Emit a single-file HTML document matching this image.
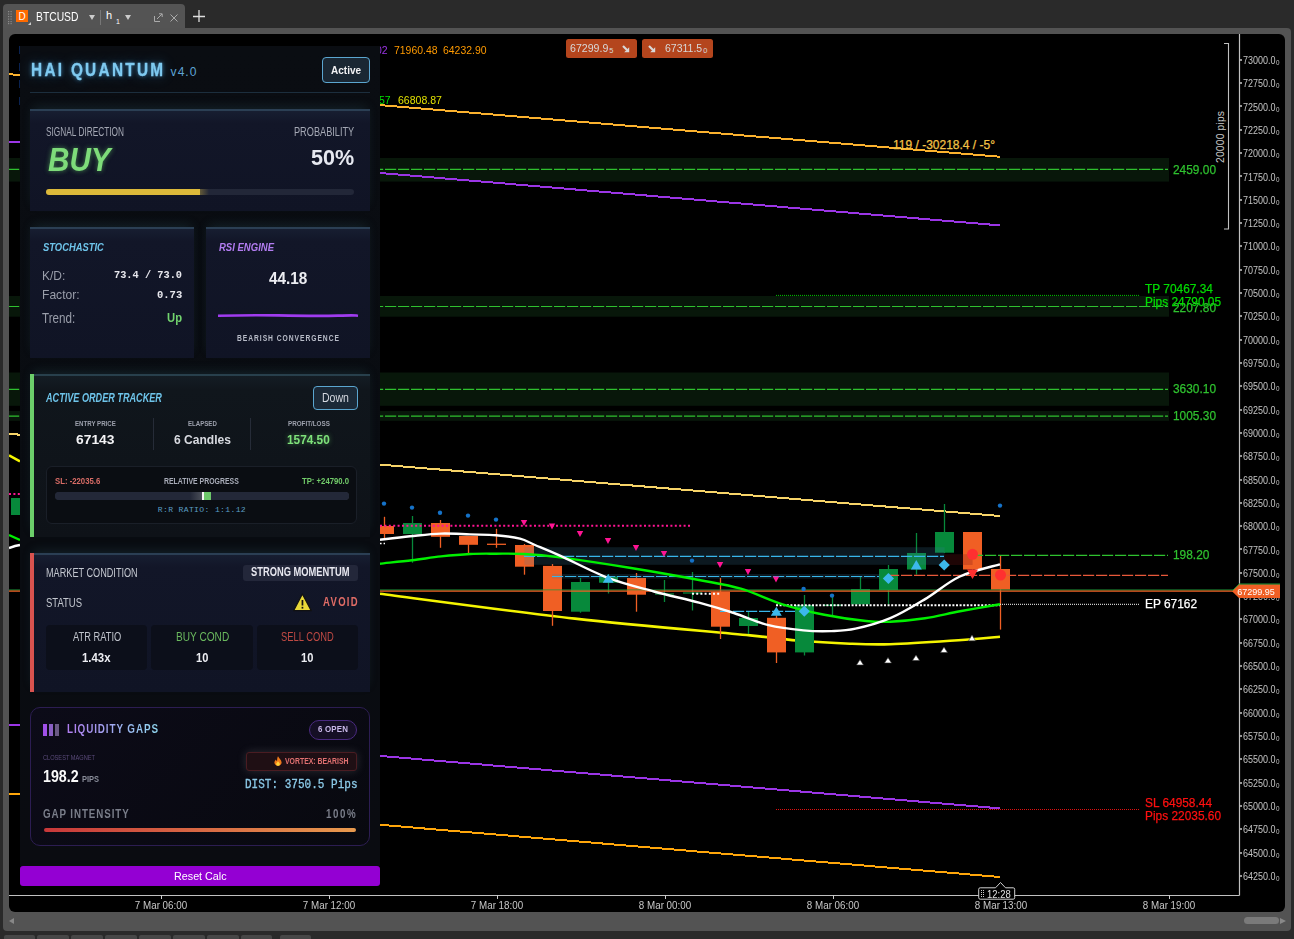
<!DOCTYPE html>
<html><head><meta charset="utf-8">
<style>
*{margin:0;padding:0;box-sizing:border-box}
html,body{width:1294px;height:939px;overflow:hidden;background:#2a2a2a;font-family:"Liberation Sans",sans-serif}
.abs{position:absolute}
#tab{position:absolute;left:3px;top:4px;width:182px;height:30px;background:#545454;border-radius:4px 4px 0 0}
#frame{position:absolute;left:3px;top:28px;width:1288px;height:903px;background:#535353;border-radius:0 4px 4px 4px}
#chart{position:absolute;left:9px;top:34px;width:1276px;height:878px;background:#000;border-radius:6px;overflow:hidden}
svg{position:absolute;left:0;top:0}
.pl{position:absolute;left:1243px;font-size:10px;color:#c4c4c4;line-height:14px;transform:scaleX(.9);transform-origin:0 0;white-space:nowrap}
.pl sub{font-size:7px;vertical-align:-1px;line-height:0;margin-left:.5px}
.ptk{position:absolute;left:1240px;width:2px;height:2px;background:#999}
.tl{position:absolute;top:898px;width:80px;text-align:center;font-size:11px;color:#c8c8c8;line-height:14px;transform:scaleX(.89)}
.ttk{position:absolute;top:895px;width:1px;height:4px;background:#ccc}
.gl{position:absolute;font-size:13px;color:#2fc12f;line-height:14px;transform:scaleX(.915);transform-origin:0 0;white-space:nowrap;-webkit-text-stroke:.25px currentColor}
.bt{position:absolute;height:5px;background:#474747;border-radius:2px 2px 0 0}
</style></head><body>
<div id="tab"></div>
<svg class="abs" style="left:7px;top:10px" width="6" height="15"><rect x="1" y="1" width="1.2" height="1.2" fill="#8a8a8a"/><rect x="1" y="3.5" width="1.2" height="1.2" fill="#8a8a8a"/><rect x="1" y="6" width="1.2" height="1.2" fill="#8a8a8a"/><rect x="1" y="8.5" width="1.2" height="1.2" fill="#8a8a8a"/><rect x="1" y="11" width="1.2" height="1.2" fill="#8a8a8a"/><rect x="1" y="13" width="1.2" height="1.2" fill="#8a8a8a"/><rect x="3.5" y="1" width="1.2" height="1.2" fill="#8a8a8a"/><rect x="3.5" y="3.5" width="1.2" height="1.2" fill="#8a8a8a"/><rect x="3.5" y="6" width="1.2" height="1.2" fill="#8a8a8a"/><rect x="3.5" y="8.5" width="1.2" height="1.2" fill="#8a8a8a"/><rect x="3.5" y="11" width="1.2" height="1.2" fill="#8a8a8a"/><rect x="3.5" y="13" width="1.2" height="1.2" fill="#8a8a8a"/></svg>
<div class="abs" style="left:16px;top:10px;width:12px;height:12px;background:#ff6a00;color:#fff;font-size:10px;line-height:13px;text-align:center">D</div>
<div class="abs" style="left:28px;top:22px;width:0;height:0;border-left:3px solid transparent;border-bottom:3px solid #ccc"></div>
<div class="abs" style="left:36px;top:10px;font-size:12px;color:#fff;line-height:14px;transform:scaleX(.86);transform-origin:0 0">BTCUSD</div>
<div class="abs" style="left:89px;top:15px;width:0;height:0;border-left:3px solid transparent;border-right:3px solid transparent;border-top:5px solid #ccc"></div>
<div class="abs" style="left:100px;top:10px;width:1px;height:15px;background:#777"></div>
<div class="abs" style="left:106px;top:9px;font-size:11px;color:#fff;line-height:12px">h</div>
<div class="abs" style="left:116px;top:18px;font-size:7px;color:#fff;line-height:8px">1</div>
<div class="abs" style="left:124.5px;top:15px;width:0;height:0;border-left:3px solid transparent;border-right:3px solid transparent;border-top:5px solid #ccc"></div>
<svg class="abs" style="left:154px;top:13px" width="9" height="9"><path d="M0.5 3v5.5h5.5M3 6l5-5M5 0.8h3.2v3.2" fill="none" stroke="#aaa" stroke-width="1"/></svg>
<svg class="abs" style="left:169.5px;top:13.5px" width="8" height="8"><path d="M0.5 0.5l7 7M7.5 0.5l-7 7" stroke="#aaa" stroke-width="1"/></svg>
<svg class="abs" style="left:193px;top:10px" width="13" height="13"><path d="M0 6.5h12M6 0v12" stroke="#ddd" stroke-width="1.3"/></svg>
<div id="frame"></div>
<div id="chart"></div>
<svg width="1294" height="939" viewBox="0 0 1294 939" style="position:absolute;left:0;top:0">
<defs><clipPath id="cc"><rect x="9" y="34" width="1229" height="861"/></clipPath></defs>
<g clip-path="url(#cc)">
<rect x="9" y="158" width="1160" height="23.6" fill="#08170a"/>
<line x1="9" y1="169.3" x2="1168" y2="169.3" stroke="#2fc12f" stroke-width="1.2" stroke-dasharray="11.2 1.8" stroke-dashoffset="1"/>
<rect x="9" y="296" width="1160" height="20.7" fill="#08170a"/>
<line x1="9" y1="306.5" x2="1168" y2="306.5" stroke="#2fc12f" stroke-width="1.2" stroke-dasharray="11.2 1.8" stroke-dashoffset="1"/>
<rect x="9" y="372.5" width="1160" height="33.3" fill="#08170a"/>
<line x1="9" y1="389.3" x2="1168" y2="389.3" stroke="#2fc12f" stroke-width="1.2" stroke-dasharray="11.2 1.8" stroke-dashoffset="1"/>
<rect x="9" y="411" width="1160" height="9.8" fill="#08170a"/>
<line x1="9" y1="416.2" x2="1168" y2="416.2" stroke="#2fc12f" stroke-width="1.2" stroke-dasharray="11.2 1.8" stroke-dashoffset="1"/>
<line x1="9" y1="74.2" x2="1000" y2="156.8" stroke="#fbb22e" stroke-width="2" shape-rendering="crispEdges"/>
<line x1="9" y1="141.6" x2="1000" y2="225.4" stroke="#9b35e6" stroke-width="2" shape-rendering="crispEdges"/>
<line x1="9" y1="433.8" x2="1000" y2="516" stroke="#f7d468" stroke-width="2" shape-rendering="crispEdges"/>
<line x1="9" y1="724.5" x2="1000" y2="808.4" stroke="#9b35e6" stroke-width="2" shape-rendering="crispEdges"/>
<line x1="9" y1="793.5" x2="1000" y2="877" stroke="#ffa60a" stroke-width="2" shape-rendering="crispEdges"/>
<path fill="none" stroke="#f5f500" stroke-width="2.6" d="M380,593.8 C412.5,597.9 513.3,611.7 575,618.6 C636.7,625.5 712.5,631.7 750,635.4 C787.5,639.1 783.3,639.4 800,640.8 C816.7,642.2 835,643.1 850,643.7 C865,644.3 873.3,644.7 890,644.2 C906.7,643.7 931.7,642 950,640.7 C968.3,639.5 991.7,637.4 1000,636.7"/>
<line x1="9" y1="455.3" x2="20" y2="461.3" stroke="#f5f500" stroke-width="2.6"/>
<line x1="384.5" y1="516.8" x2="384.5" y2="538.7" stroke="#f05f24" stroke-width="1.3"/>
<rect x="375" y="526" width="19" height="8" fill="#f05f24"/>
<line x1="412.5" y1="516" x2="412.5" y2="562.7" stroke="#07893b" stroke-width="1.3"/>
<rect x="403" y="523" width="19" height="11" fill="#07893b"/>
<line x1="440.5" y1="520" x2="440.5" y2="547.8" stroke="#f05f24" stroke-width="1.3"/>
<rect x="431" y="523" width="19" height="13.8" fill="#f05f24"/>
<line x1="468.5" y1="536" x2="468.5" y2="554.7" stroke="#f05f24" stroke-width="1.3"/>
<rect x="459" y="536" width="19" height="8.8" fill="#f05f24"/>
<line x1="496.5" y1="528.8" x2="496.5" y2="547.8" stroke="#f05f24" stroke-width="1.3"/>
<line x1="487" y1="544.3" x2="506" y2="544.3" stroke="#f05f24" stroke-width="1.3"/>
<line x1="524.5" y1="544" x2="524.5" y2="574.7" stroke="#f05f24" stroke-width="1.3"/>
<rect x="515" y="545" width="19" height="21.7" fill="#f05f24"/>
<line x1="552.5" y1="564" x2="552.5" y2="625.8" stroke="#f05f24" stroke-width="1.3"/>
<rect x="543" y="565.9" width="19" height="45.1" fill="#f05f24"/>
<line x1="580.5" y1="578" x2="580.5" y2="612.7" stroke="#07893b" stroke-width="1.3"/>
<rect x="571" y="582" width="19" height="29.7" fill="#07893b"/>
<line x1="608.5" y1="574" x2="608.5" y2="593.5" stroke="#07893b" stroke-width="1.3"/>
<rect x="599" y="576.4" width="19" height="6.3" fill="#07893b"/>
<line x1="636.5" y1="573" x2="636.5" y2="611.7" stroke="#f05f24" stroke-width="1.3"/>
<rect x="627" y="578" width="19" height="16.7" fill="#f05f24"/>
<line x1="664.5" y1="580" x2="664.5" y2="602" stroke="#07893b" stroke-width="1.3"/>
<line x1="655" y1="594" x2="674" y2="594" stroke="#07893b" stroke-width="1.3"/>
<line x1="692.5" y1="572" x2="692.5" y2="610.5" stroke="#07893b" stroke-width="1.3"/>
<line x1="683" y1="593" x2="702" y2="593" stroke="#07893b" stroke-width="1.3"/>
<line x1="720.5" y1="578" x2="720.5" y2="639" stroke="#f05f24" stroke-width="1.3"/>
<rect x="711" y="591.8" width="19" height="34.9" fill="#f05f24"/>
<line x1="748.5" y1="611.7" x2="748.5" y2="634" stroke="#07893b" stroke-width="1.3"/>
<rect x="739" y="618" width="19" height="8" fill="#07893b"/>
<line x1="776.5" y1="615.4" x2="776.5" y2="663" stroke="#f05f24" stroke-width="1.3"/>
<rect x="767" y="617.8" width="19" height="34.6" fill="#f05f24"/>
<line x1="804.5" y1="595" x2="804.5" y2="655.5" stroke="#07893b" stroke-width="1.3"/>
<rect x="795" y="605" width="19" height="47.4" fill="#07893b"/>
<line x1="832.5" y1="595" x2="832.5" y2="615.4" stroke="#07893b" stroke-width="1.3"/>
<line x1="823" y1="605.3" x2="842" y2="605.3" stroke="#07893b" stroke-width="1.3"/>
<line x1="860.5" y1="576.6" x2="860.5" y2="604.3" stroke="#07893b" stroke-width="1.3"/>
<rect x="851" y="589" width="19" height="15.3" fill="#07893b"/>
<line x1="888.5" y1="565" x2="888.5" y2="604.3" stroke="#07893b" stroke-width="1.3"/>
<rect x="879" y="569" width="19" height="21" fill="#07893b"/>
<line x1="916.5" y1="533" x2="916.5" y2="574.6" stroke="#07893b" stroke-width="1.3"/>
<rect x="907" y="553" width="19" height="16.5" fill="#07893b"/>
<line x1="944.5" y1="504" x2="944.5" y2="553" stroke="#07893b" stroke-width="1.3"/>
<rect x="935" y="532" width="19" height="20.7" fill="#07893b"/>
<line x1="972.5" y1="532" x2="972.5" y2="569.5" stroke="#f05f24" stroke-width="1.3"/>
<rect x="963" y="532" width="19" height="37.5" fill="#f05f24"/>
<line x1="1000.5" y1="555.7" x2="1000.5" y2="629.6" stroke="#f05f24" stroke-width="1.3"/>
<rect x="991" y="569" width="19" height="20.7" fill="#f05f24"/>
<rect x="11" y="498" width="9" height="17" fill="#07893b"/>
<rect x="524.4" y="547.2" width="420.2" height="17.6" fill="rgba(60,125,160,0.2)"/>
<rect x="944.6" y="554.2" width="28" height="10.8" fill="rgba(120,20,20,0.25)"/>
<rect x="552" y="574" width="328" height="4.6" fill="rgba(60,125,160,0.2)"/>
<line x1="972" y1="555.4" x2="1168" y2="555.4" stroke="#2fc12f" stroke-width="1.2" stroke-dasharray="11.2 1.8"/>
<line x1="524" y1="556.4" x2="944" y2="556.4" stroke="#38b6ea" stroke-width="1.2" stroke-dasharray="11.2 1.8"/>
<line x1="552" y1="576.5" x2="879" y2="576.5" stroke="#38b6ea" stroke-width="1.2" stroke-dasharray="11.2 1.8"/>
<line x1="720" y1="611.4" x2="795" y2="611.4" stroke="#38b6ea" stroke-width="1.2" stroke-dasharray="11.2 1.8"/>
<line x1="888" y1="575.4" x2="1168" y2="575.4" stroke="#e8583a" stroke-width="1.2" stroke-dasharray="11.2 1.8"/>
<line x1="380" y1="525.8" x2="692" y2="525.8" stroke="#ff1493" stroke-width="2" stroke-dasharray="2 2.4"/>
<line x1="9" y1="494" x2="20" y2="494" stroke="#ff1493" stroke-width="2" stroke-dasharray="2 2.4"/>
<line x1="776" y1="295.4" x2="1140" y2="295.4" stroke="#00c800" stroke-width="1" stroke-dasharray="1 1"/>
<line x1="776" y1="809.5" x2="1140" y2="809.5" stroke="#e01010" stroke-width="1" stroke-dasharray="1 1"/>
<line x1="776" y1="605.2" x2="1000" y2="605.2" stroke="#ffffff" stroke-width="2" stroke-dasharray="2 1.6"/>
<line x1="1000" y1="604.3" x2="1140" y2="604.3" stroke="#ffffff" stroke-width="1" stroke-dasharray="1 1"/>
<line x1="692" y1="593.8" x2="721" y2="593.8" stroke="#ffffff" stroke-width="2" stroke-dasharray="2 2.2"/>
<line x1="380" y1="543.5" x2="385" y2="543.5" stroke="#ffffff" stroke-width="1.6" stroke-dasharray="1.6 2"/>
<line x1="9" y1="590" x2="1238" y2="590" stroke="#1f9a3a" stroke-width="1.2"/>
<line x1="9" y1="591.2" x2="1238" y2="591.2" stroke="#f05f24" stroke-width="1.2"/>
<path fill="none" stroke="#00f000" stroke-width="2.4" d="M380,563.7 C385.3,563.1 401.8,561.5 412,560.3 C422.2,559.1 431.3,557.4 441,556.4 C450.7,555.4 460.8,554.5 470,554 C479.2,553.5 487,553.7 496,553.7 C505,553.7 513.3,553.4 524,554 C534.7,554.6 542.4,555.1 560,557.4 C577.6,559.7 606.3,564 629.5,567.8 C652.7,571.6 680.5,576.5 699,580 C717.5,583.5 726.9,584.7 740.8,588.7 C754.7,592.8 768.6,599.9 782.5,604.3 C796.4,608.6 810.4,612 824.3,614.8 C838.2,617.6 855,619.9 866,621 C877,622.1 880.5,622.2 890.3,621.7 C900.1,621.2 913.4,619.9 925,618.2 C936.6,616.5 947.5,613.6 960,611.3 C972.5,609 993.3,605.5 1000,604.3"/>
<path fill="none" stroke="#ffffff" stroke-width="2.4" d="M380,539.8 C385,539.2 399.8,537.3 410,536.3 C420.2,535.3 431,533.9 441,533.6 C451,533.3 460.8,534.1 470,534.4 C479.2,534.7 487.7,534.5 496,535.2 C504.3,535.9 513.5,537.1 520,538.7 C526.5,540.3 528.3,542.2 535,545 C541.7,547.8 547.7,550.1 560,555.6 C572.3,561.1 593.1,572.2 608.7,578.2 C624.4,584.2 638.9,587.4 653.9,591.5 C668.9,595.6 685.7,599 699,602.6 C712.3,606.2 722.3,609.2 733.9,613 C745.5,616.8 757,622.3 768.6,625.2 C780.2,628.1 793,629.4 803.4,630.4 C813.8,631.4 822.5,631.4 831.2,631.1 C839.9,630.8 845.6,630.9 855.5,628.7 C865.4,626.6 878.7,623.1 890.3,618.2 C901.9,613.3 913.5,606.1 925.1,599.1 C936.7,592.1 947.4,582.3 959.9,576.5 C972.4,570.7 993.3,566.3 1000,564.3"/>
<line x1="9" y1="535" x2="20" y2="540" stroke="#00f000" stroke-width="2.4"/>
<polyline fill="none" stroke="#ffffff" stroke-width="2.4" points="9,548 15,546 20,545"/>
<circle cx="384" cy="503.6" r="2.2" fill="#1572c8"/>
<circle cx="412" cy="507.6" r="2.2" fill="#1572c8"/>
<circle cx="440" cy="512.7" r="2.2" fill="#1572c8"/>
<circle cx="468" cy="515.6" r="2.2" fill="#1572c8"/>
<circle cx="496" cy="519.6" r="2.2" fill="#1572c8"/>
<circle cx="692" cy="560.6" r="2.2" fill="#1572c8"/>
<circle cx="803.6" cy="589" r="2.2" fill="#1572c8"/>
<circle cx="832" cy="595.6" r="2.2" fill="#1572c8"/>
<circle cx="1000" cy="505.6" r="2.2" fill="#1572c8"/>
<polygon points="520.8,520 527.2,520 524,526" fill="#ff1493"/>
<polygon points="548.8,523.5 555.2,523.5 552,529.5" fill="#ff1493"/>
<polygon points="576.8,531 583.2,531 580,537" fill="#ff1493"/>
<polygon points="604.8,538 611.2,538 608,544" fill="#ff1493"/>
<polygon points="632.8,545 639.2,545 636,551" fill="#ff1493"/>
<polygon points="660.8,551 667.2,551 664,557" fill="#ff1493"/>
<polygon points="716.8,562 723.2,562 720,568" fill="#ff1493"/>
<polygon points="744.8,569 751.2,569 748,575" fill="#ff1493"/>
<polygon points="772.8,576.5 779.2,576.5 776,582.5" fill="#ff1493"/>
<polygon points="608.2,574 613.7,582.7 602.7,582.7" fill="#3cb8ec"/>
<polygon points="776.3,606.7 781.8,615.8 770.8,615.8" fill="#3cb8ec"/>
<polygon points="916.3,560 921.8,569.5 910.8,569.5" fill="#3cb8ec"/>
<polygon points="804.3,605.8 809.9,611.3 804.3,616.8 798.7,611.3" fill="#3cb8ec"/>
<polygon points="888.4,573 894,578.5 888.4,584 882.8,578.5" fill="#3cb8ec"/>
<polygon points="944.2,559.5 949.8,565 944.2,570.5 938.6,565" fill="#3cb8ec"/>
<polygon points="860,659.5 863.5,665 856.5,665" fill="#ffffff" stroke="#303030" stroke-width="0.6"/>
<polygon points="888,657.5 891.5,663 884.5,663" fill="#ffffff" stroke="#303030" stroke-width="0.6"/>
<polygon points="916,655 919.5,660.5 912.5,660.5" fill="#ffffff" stroke="#303030" stroke-width="0.6"/>
<polygon points="944,647 947.5,652.5 940.5,652.5" fill="#ffffff" stroke="#303030" stroke-width="0.6"/>
<polygon points="972,635 975.5,640.8 968.5,640.8" fill="#ffffff" stroke="#303030" stroke-width="0.6"/>
<circle cx="972.5" cy="554.3" r="5.5" fill="#ff3030"/>
<circle cx="1000.5" cy="575" r="5.5" fill="#ff3030"/>
<polygon points="967,569.5 978,569.5 972.5,579" fill="#ff3030"/>
</g>
<line x1="1239.5" y1="34" x2="1239.5" y2="895.5" stroke="#c0c0c0" stroke-width="1.2"/>
<line x1="9" y1="895.5" x2="1239.5" y2="895.5" stroke="#c0c0c0" stroke-width="1.2"/>
<path d="M1224 43.5h4.5v185.5h-4.5" fill="none" stroke="#c0c0c0" stroke-width="1.1"/>
</svg>
<div class="abs" style="left:1214px;top:136px;width:60px;transform:rotate(-90deg) scaleX(.935);transform-origin:0 0;font-size:11px;color:#c8c8c8;line-height:12px;letter-spacing:0.2px;top:163px">20000 pips</div>
<div class="pl" style="top:53.9px">73000.0<sub>0</sub></div>
<div class="ptk" style="top:58.8px"></div>
<div class="pl" style="top:77.2px">72750.0<sub>0</sub></div>
<div class="ptk" style="top:82.1px"></div>
<div class="pl" style="top:100.5px">72500.0<sub>0</sub></div>
<div class="ptk" style="top:105.4px"></div>
<div class="pl" style="top:123.8px">72250.0<sub>0</sub></div>
<div class="ptk" style="top:128.7px"></div>
<div class="pl" style="top:147.2px">72000.0<sub>0</sub></div>
<div class="ptk" style="top:152.1px"></div>
<div class="pl" style="top:170.5px">71750.0<sub>0</sub></div>
<div class="ptk" style="top:175.4px"></div>
<div class="pl" style="top:193.8px">71500.0<sub>0</sub></div>
<div class="ptk" style="top:198.7px"></div>
<div class="pl" style="top:217.1px">71250.0<sub>0</sub></div>
<div class="ptk" style="top:222.0px"></div>
<div class="pl" style="top:240.4px">71000.0<sub>0</sub></div>
<div class="ptk" style="top:245.3px"></div>
<div class="pl" style="top:263.7px">70750.0<sub>0</sub></div>
<div class="ptk" style="top:268.6px"></div>
<div class="pl" style="top:287.0px">70500.0<sub>0</sub></div>
<div class="ptk" style="top:291.9px"></div>
<div class="pl" style="top:310.4px">70250.0<sub>0</sub></div>
<div class="ptk" style="top:315.3px"></div>
<div class="pl" style="top:333.7px">70000.0<sub>0</sub></div>
<div class="ptk" style="top:338.6px"></div>
<div class="pl" style="top:357.0px">69750.0<sub>0</sub></div>
<div class="ptk" style="top:361.9px"></div>
<div class="pl" style="top:380.3px">69500.0<sub>0</sub></div>
<div class="ptk" style="top:385.2px"></div>
<div class="pl" style="top:403.6px">69250.0<sub>0</sub></div>
<div class="ptk" style="top:408.5px"></div>
<div class="pl" style="top:426.9px">69000.0<sub>0</sub></div>
<div class="ptk" style="top:431.8px"></div>
<div class="pl" style="top:450.2px">68750.0<sub>0</sub></div>
<div class="ptk" style="top:455.1px"></div>
<div class="pl" style="top:473.6px">68500.0<sub>0</sub></div>
<div class="ptk" style="top:478.5px"></div>
<div class="pl" style="top:496.9px">68250.0<sub>0</sub></div>
<div class="ptk" style="top:501.8px"></div>
<div class="pl" style="top:520.2px">68000.0<sub>0</sub></div>
<div class="ptk" style="top:525.1px"></div>
<div class="pl" style="top:543.5px">67750.0<sub>0</sub></div>
<div class="ptk" style="top:548.4px"></div>
<div class="pl" style="top:566.8px">67500.0<sub>0</sub></div>
<div class="ptk" style="top:571.7px"></div>
<div class="pl" style="top:590.1px">67250.0<sub>0</sub></div>
<div class="ptk" style="top:595.0px"></div>
<div class="pl" style="top:613.4px">67000.0<sub>0</sub></div>
<div class="ptk" style="top:618.3px"></div>
<div class="pl" style="top:636.8px">66750.0<sub>0</sub></div>
<div class="ptk" style="top:641.6px"></div>
<div class="pl" style="top:660.1px">66500.0<sub>0</sub></div>
<div class="ptk" style="top:665.0px"></div>
<div class="pl" style="top:683.4px">66250.0<sub>0</sub></div>
<div class="ptk" style="top:688.3px"></div>
<div class="pl" style="top:706.7px">66000.0<sub>0</sub></div>
<div class="ptk" style="top:711.6px"></div>
<div class="pl" style="top:730.0px">65750.0<sub>0</sub></div>
<div class="ptk" style="top:734.9px"></div>
<div class="pl" style="top:753.3px">65500.0<sub>0</sub></div>
<div class="ptk" style="top:758.2px"></div>
<div class="pl" style="top:776.6px">65250.0<sub>0</sub></div>
<div class="ptk" style="top:781.5px"></div>
<div class="pl" style="top:799.9px">65000.0<sub>0</sub></div>
<div class="ptk" style="top:804.8px"></div>
<div class="pl" style="top:823.3px">64750.0<sub>0</sub></div>
<div class="ptk" style="top:828.2px"></div>
<div class="pl" style="top:846.6px">64500.0<sub>0</sub></div>
<div class="ptk" style="top:851.5px"></div>
<div class="pl" style="top:869.9px">64250.0<sub>0</sub></div>
<div class="ptk" style="top:874.8px"></div>
<svg class="abs" style="left:0;top:0" width="1294" height="939"><path d="M1232 591.2L1239 584.3H1280V598H1239Z" fill="#f05f24"/><path d="M1232.5 590.5L1239.2 584H1280" fill="none" stroke="#1f9a3a" stroke-width="1"/></svg>
<div class="abs" style="left:1232px;top:584.5px;width:48px;font-size:9.8px;color:#fff;line-height:13px;text-align:center;transform:scaleX(.92)">67299.95</div>
<div class="tl" style="left:121px">7 Mar 06:00</div>
<div class="ttk" style="left:160.5px"></div>
<div class="tl" style="left:289px">7 Mar 12:00</div>
<div class="ttk" style="left:328.5px"></div>
<div class="tl" style="left:457px">7 Mar 18:00</div>
<div class="ttk" style="left:496.5px"></div>
<div class="tl" style="left:625px">8 Mar 00:00</div>
<div class="ttk" style="left:664.5px"></div>
<div class="tl" style="left:793px">8 Mar 06:00</div>
<div class="ttk" style="left:832.5px"></div>
<div class="tl" style="left:961px">8 Mar 13:00</div>
<div class="ttk" style="left:1000.5px"></div>
<div class="tl" style="left:1129px">8 Mar 19:00</div>
<div class="ttk" style="left:1168.5px"></div>
<svg class="abs" style="left:0;top:0" width="1294" height="939"><path d="M978.7 897.7v-8.4a1.5 1.5 0 0 1 1.5-1.5h15.3l5-5.3 5 5.3h7.7a1.5 1.5 0 0 1 1.5 1.5v8.4a1.5 1.5 0 0 1-1.5 1.5h-33a1.5 1.5 0 0 1-1.5-1.5z" fill="#000" stroke="#d0d0d0" stroke-width="1"/></svg>
<svg class="abs" style="left:981px;top:889px" width="4" height="9"><rect x="0" y="1" width="1" height="1" fill="#ccc"/><rect x="0" y="3" width="1" height="1" fill="#ccc"/><rect x="0" y="5" width="1" height="1" fill="#ccc"/><rect x="0" y="7" width="1" height="1" fill="#ccc"/><rect x="2" y="1" width="1" height="1" fill="#ccc"/><rect x="2" y="3" width="1" height="1" fill="#ccc"/><rect x="2" y="5" width="1" height="1" fill="#ccc"/><rect x="2" y="7" width="1" height="1" fill="#ccc"/></svg><div class="abs" style="left:986.5px;top:888px;font-size:10.5px;color:#e0e0e0;line-height:12px;transform:scaleX(.9);transform-origin:0 0">12:28</div>
<div class="gl" style="left:1173px;top:163px">2459.00</div>
<div class="gl" style="left:1173px;top:301px">2207.80</div>
<div class="gl" style="left:1173px;top:382px">3630.10</div>
<div class="gl" style="left:1173px;top:409px">1005.30</div>
<div class="gl" style="left:1173px;top:548px">198.20</div>
<div class="gl" style="left:1145px;top:282px;color:#00dc00">TP 70467.34</div>
<div class="gl" style="left:1145px;top:295px;color:#00dc00">Pips 24790.05</div>
<div class="gl" style="left:1145px;top:796px;color:#ff1010">SL 64958.44</div>
<div class="gl" style="left:1145px;top:809px;color:#ff1010">Pips 22035.60</div>
<div class="gl" style="left:1145px;top:597px;color:#fff;font-size:13px">EP 67162</div>
<div class="gl" style="left:893px;top:138px;color:#f3c246;font-size:12px;transform:none">119 / -30218.4 / -5°</div>
<div class="abs" style="left:375.5px;top:43.8px;font-size:11px;line-height:13px;color:#9b35e6;transform:scaleX(.95);transform-origin:0 0">02</div><div class="abs" style="left:394.3px;top:43.8px;font-size:11px;line-height:13px;color:#ff9a00;transform:scaleX(.948);transform-origin:0 0">71960.48</div><div class="abs" style="left:443.4px;top:43.8px;font-size:11px;line-height:13px;color:#ff9a00;transform:scaleX(.948);transform-origin:0 0">64232.90</div>
<div class="abs" style="left:378.5px;top:94.3px;font-size:11px;line-height:13px;color:#00e000;transform:scaleX(.95);transform-origin:0 0">57</div><div class="abs" style="left:397.6px;top:94.3px;font-size:11px;line-height:13px;color:#e0e000;transform:scaleX(.957);transform-origin:0 0">66808.87</div>
<div class="abs" style="left:566.2px;top:39.2px;width:70.5px;height:18.5px;background:#b4451d;border-radius:2.5px"></div><div class="abs" style="left:570px;top:41.8px;font-size:11px;line-height:13px;color:#d8d8d8;transform:scaleX(.963);transform-origin:0 0">67299.9</div><div class="abs" style="left:609.3px;top:45.5px;font-size:7.5px;line-height:9px;color:#d8d8d8">5</div><svg class="abs" style="left:622px;top:45px" width="8" height="8"><path d="M1 1L5 5" stroke="#d8d8d8" stroke-width="2.2"/><path d="M7.2 2.2V7.2H2.2Z" fill="#d8d8d8"/></svg>
<div class="abs" style="left:642.2px;top:39.2px;width:70.5px;height:18.5px;background:#b4451d;border-radius:2.5px"></div><svg class="abs" style="left:648px;top:45px" width="8" height="8"><path d="M1 1L5 5" stroke="#d8d8d8" stroke-width="2.2"/><path d="M7.2 2.2V7.2H2.2Z" fill="#d8d8d8"/></svg><div class="abs" style="left:665px;top:41.8px;font-size:11px;line-height:13px;color:#d8d8d8;transform:scaleX(.955);transform-origin:0 0">67311.5</div><div class="abs" style="left:703.2px;top:45.5px;font-size:7.5px;line-height:9px;color:#d8d8d8">0</div>
<div class="abs" style="left:1244px;top:917px;width:35px;height:7px;background:#7a7a7a;border-radius:4px"></div>
<div class="abs" style="left:1280px;top:918px;width:0;height:0;border-top:3px solid transparent;border-bottom:3px solid transparent;border-left:6px solid #888"></div>
<div class="abs" style="left:9px;top:918px;width:0;height:0;border-top:3px solid transparent;border-bottom:3px solid transparent;border-right:5px solid #888"></div>
<div class="bt" style="left:4px;top:935px;width:31px"></div><div class="bt" style="left:37px;top:935px;width:32px"></div><div class="bt" style="left:71px;top:935px;width:32px"></div><div class="bt" style="left:105px;top:935px;width:32px"></div><div class="bt" style="left:139px;top:935px;width:32px"></div><div class="bt" style="left:173px;top:935px;width:32px"></div><div class="bt" style="left:207px;top:935px;width:32px"></div><div class="bt" style="left:241px;top:935px;width:31px"></div><div class="bt" style="left:280px;top:935px;width:31px"></div>
<style>#panel .a{position:absolute}#panel .t{white-space:nowrap}</style>
<div id="panel" style="position:absolute;left:20px;top:46px;width:360px;height:842px">
<div class="a" style="left:0.00px;top:0.00px;width:360.00px;height:820.00px;background:linear-gradient(180deg,#0a0d12,#090c11 60%,#0a0c11)"></div>
<div class="a" style="left:-1.00px;top:0.00px;width:1.00px;height:61.00px;background:repeating-linear-gradient(180deg,#0a2250 0 8.5px,transparent 8.5px 17px)"></div>
<div class="a t" style="left:10.70px;top:14.36px;font-size:19.19px;line-height:19.19px;color:#7fcaf0;font-weight:bold;letter-spacing:2.87px;transform:scaleX(0.800);transform-origin:0 0;text-shadow:0 0 5px rgba(80,170,230,.7),0 0 14px rgba(80,170,230,.45);-webkit-text-stroke:.35px #7fcaf0;">HAI QUANTUM</div>
<div class="a t" style="left:150.60px;top:20.09px;font-size:12.06px;line-height:12.06px;color:#5da4d4;letter-spacing:1.01px;">v4.0</div>
<div class="a" style="left:302.00px;top:11.00px;width:48.00px;height:26.00px;border:1.5px solid #5ba6d0;background:#1a2733;border-radius:4px"></div>
<div class="a t" style="left:311.00px;top:18.80px;font-size:11.34px;line-height:11.34px;color:#f2f2f4;font-weight:bold;transform:scaleX(0.885);transform-origin:0 0;">Active</div>
<div class="a" style="left:10.00px;top:46.00px;width:340.00px;height:1.20px;background:#1c2e3d"></div>
<div class="a" style="left:10.00px;top:63.00px;width:340.00px;height:102.00px;background:linear-gradient(180deg,#171e31 0,#121628 12px,#101425 100%);border-top:2px solid #2b3f54;box-shadow:0 -5px 10px -3px rgba(45,90,100,.28)"></div>
<div class="a t" style="left:25.70px;top:80.46px;font-size:12.21px;line-height:12.21px;color:#a4a8b4;transform:scaleX(0.679);transform-origin:0 0;">SIGNAL DIRECTION</div>
<div class="a t" style="left:273.50px;top:80.46px;font-size:12.21px;line-height:12.21px;color:#a4a8b4;transform:scaleX(0.752);transform-origin:0 0;">PROBABILITY</div>
<div class="a t" style="left:27.80px;top:97.30px;font-size:33.43px;line-height:33.43px;color:#7edc7a;font-weight:bold;font-style:italic;transform:scaleX(0.888);transform-origin:0 0;text-shadow:0 0 6px rgba(110,220,110,.55);">BUY</div>
<div class="a t" style="left:291.00px;top:99.71px;font-size:22.67px;line-height:22.67px;color:#e6e8f0;font-weight:bold;transform:scaleX(0.951);transform-origin:0 0;">50%</div>
<div class="a" style="left:25.70px;top:143.00px;width:308.30px;height:6.00px;background:#222738;border-radius:3px"></div>
<div class="a" style="left:25.70px;top:143.00px;width:154.30px;height:6.00px;background:#dcb93a;border-radius:3px 0 0 3px"></div>
<div class="a" style="left:180.00px;top:143.00px;width:9.00px;height:6.00px;background:linear-gradient(90deg,rgba(220,185,58,.35),rgba(220,185,58,0))"></div>
<div class="a" style="left:10.00px;top:181.00px;width:164.00px;height:131.00px;background:linear-gradient(180deg,#171e31 0,#121628 12px,#101425 100%);border-top:2px solid #2b3f54;box-shadow:0 -5px 10px -3px rgba(45,90,100,.28)"></div>
<div class="a t" style="left:22.70px;top:195.98px;font-size:11.48px;line-height:11.48px;color:#6ec4ea;font-weight:bold;font-style:italic;transform:scaleX(0.819);transform-origin:0 0;">STOCHASTIC</div>
<div class="a t" style="left:21.90px;top:222.63px;font-size:13.08px;line-height:13.08px;color:#9a9eaa;transform:scaleX(0.918);transform-origin:0 0;">K/D:</div>
<div class="a t" style="left:94.30px;top:224.15px;font-size:11.68px;line-height:11.68px;color:#e8e8ee;font-family:'Liberation Mono',monospace;font-weight:bold;transform:scaleX(0.883);transform-origin:0 0;">73.4 / 73.0</div>
<div class="a t" style="left:21.90px;top:242.48px;font-size:13.37px;line-height:13.37px;color:#9a9eaa;transform:scaleX(0.904);transform-origin:0 0;">Factor:</div>
<div class="a t" style="left:136.80px;top:244.35px;font-size:11.68px;line-height:11.68px;color:#e8e8ee;font-family:'Liberation Mono',monospace;font-weight:bold;transform:scaleX(0.901);transform-origin:0 0;">0.73</div>
<div class="a t" style="left:21.90px;top:265.89px;font-size:13.95px;line-height:13.95px;color:#9a9eaa;transform:scaleX(0.837);transform-origin:0 0;">Trend:</div>
<div class="a t" style="left:146.90px;top:266.46px;font-size:12.21px;line-height:12.21px;color:#72d46e;font-weight:bold;transform:scaleX(0.922);transform-origin:0 0;">Up</div>
<div class="a" style="left:186.00px;top:181.00px;width:164.00px;height:131.00px;background:linear-gradient(180deg,#171e31 0,#121628 12px,#101425 100%);border-top:2px solid #2b3f54;box-shadow:0 -5px 10px -3px rgba(45,90,100,.28)"></div>
<div class="a t" style="left:198.70px;top:195.98px;font-size:11.48px;line-height:11.48px;color:#b27cf0;font-weight:bold;font-style:italic;transform:scaleX(0.830);transform-origin:0 0;">RSI ENGINE</div>
<div class="a t" style="left:248.80px;top:225.01px;font-size:15.70px;line-height:15.70px;color:#ecedf2;font-weight:bold;transform:scaleX(0.978);transform-origin:0 0;">44.18</div>
<svg class="a" style="left:198px;top:266px" width="142" height="8"><path d="M0 3.8C20 3.2 40 3 60 3.4S100 4.2 120 3.6 136 3.2 140 3.8" fill="none" stroke="#a03cf0" stroke-width="2.6"/></svg>
<div class="a t" style="left:216.70px;top:288.46px;font-size:8.43px;line-height:8.43px;color:#b8bcc8;font-weight:bold;letter-spacing:1.18px;transform:scaleX(0.800);transform-origin:0 0;">BEARISH CONVERGENCE</div>
<div class="a" style="left:10.00px;top:328.00px;width:340.00px;height:162.50px;background:linear-gradient(180deg,#141d24 0,#10161c 14px,#0e1218 100%);border-top:2px solid #28404c;box-shadow:0 -5px 10px -3px rgba(45,90,100,.3)"></div>
<div class="a" style="left:10.00px;top:328.00px;width:4.20px;height:162.50px;background:#6cce6a"></div>
<div class="a t" style="left:26.10px;top:345.69px;font-size:12.06px;line-height:12.06px;color:#6ec4ea;font-weight:bold;font-style:italic;transform:scaleX(0.756);transform-origin:0 0;">ACTIVE ORDER TRACKER</div>
<div class="a" style="left:293.20px;top:340.20px;width:44.80px;height:23.50px;border:1.5px solid #5aa6d0;background:#1b2937;border-radius:4px"></div>
<div class="a t" style="left:302.20px;top:345.59px;font-size:12.06px;line-height:12.06px;color:#d4d8e0;transform:scaleX(0.874);transform-origin:0 0;">Down</div>
<div class="a t" style="left:54.90px;top:374.67px;font-size:7.12px;line-height:7.12px;color:#9ca0ac;font-weight:bold;transform:scaleX(0.860);transform-origin:0 0;">ENTRY PRICE</div>
<div class="a t" style="left:56.00px;top:387.23px;font-size:13.08px;line-height:13.08px;color:#f4f4f6;font-weight:bold;transform:scaleX(1.057);transform-origin:0 0;">67143</div>
<div class="a" style="left:133.20px;top:372.00px;width:1.00px;height:32.00px;background:#262c38"></div>
<div class="a t" style="left:167.60px;top:374.67px;font-size:7.12px;line-height:7.12px;color:#9ca0ac;font-weight:bold;transform:scaleX(0.859);transform-origin:0 0;">ELAPSED</div>
<div class="a t" style="left:153.70px;top:387.23px;font-size:13.08px;line-height:13.08px;color:#d8dae0;font-weight:bold;transform:scaleX(0.922);transform-origin:0 0;">6 Candles</div>
<div class="a" style="left:230.20px;top:372.00px;width:1.00px;height:32.00px;background:#262c38"></div>
<div class="a t" style="left:268.00px;top:374.67px;font-size:7.12px;line-height:7.12px;color:#9ca0ac;font-weight:bold;transform:scaleX(0.883);transform-origin:0 0;">PROFIT/LOSS</div>
<div class="a t" style="left:267.20px;top:387.28px;font-size:13.37px;line-height:13.37px;color:#7ee07a;font-weight:bold;transform:scaleX(0.886);transform-origin:0 0;text-shadow:0 0 6px rgba(110,220,110,.5);">1574.50</div>
<div class="a" style="left:26.30px;top:419.90px;width:310.90px;height:58.50px;border:1px solid #1a1f28;background:#0a0d12;border-radius:6px"></div>
<div class="a t" style="left:34.80px;top:431.22px;font-size:8.72px;line-height:8.72px;color:#d86c66;font-weight:bold;transform:scaleX(0.890);transform-origin:0 0;">SL: -22035.6</div>
<div class="a t" style="left:143.50px;top:431.22px;font-size:8.72px;line-height:8.72px;color:#a8acb8;font-weight:bold;transform:scaleX(0.793);transform-origin:0 0;">RELATIVE PROGRESS</div>
<div class="a t" style="left:282.20px;top:431.22px;font-size:8.72px;line-height:8.72px;color:#72cc6a;font-weight:bold;transform:scaleX(0.886);transform-origin:0 0;">TP: +24790.0</div>
<div class="a" style="left:34.80px;top:445.90px;width:294.30px;height:7.90px;background:linear-gradient(90deg,#232838 0,#232838 85%,#3a3e4a 100%);border-radius:4px"></div>
<div class="a" style="left:34.80px;top:445.90px;width:294.30px;height:7.90px;background:#232838;border-radius:4px"></div>
<div class="a" style="left:170.00px;top:445.90px;width:11.60px;height:7.90px;background:linear-gradient(90deg,#232838,#4a4e58)"></div>
<div class="a" style="left:181.60px;top:445.90px;width:2.40px;height:7.90px;background:#f4f4f4"></div>
<div class="a" style="left:184.00px;top:445.90px;width:7.20px;height:7.90px;background:#6cc86a"></div>
<div class="a t" style="left:137.80px;top:460.34px;font-size:8.04px;line-height:8.04px;color:#5a9ec4;font-family:'Liberation Mono',monospace;letter-spacing:0.37px;">R:R RATIO: 1:1.12</div>
<div class="a" style="left:10.00px;top:507.00px;width:340.00px;height:138.50px;background:linear-gradient(180deg,#171e31 0,#121628 12px,#101425 100%);border-top:2px solid #2b3f54;box-shadow:0 -5px 10px -3px rgba(45,90,100,.28)"></div>
<div class="a" style="left:10.00px;top:507.00px;width:4.20px;height:138.50px;background:#d9534f"></div>
<div class="a t" style="left:25.90px;top:520.52px;font-size:12.50px;line-height:12.50px;color:#c4c8d0;transform:scaleX(0.731);transform-origin:0 0;">MARKET CONDITION</div>
<div class="a" style="left:223.20px;top:518.90px;width:114.50px;height:16.00px;background:#23273a;border-radius:3px"></div>
<div class="a t" style="left:231.40px;top:520.91px;font-size:11.92px;line-height:11.92px;color:#e8e8f0;font-weight:bold;transform:scaleX(0.783);transform-origin:0 0;">STRONG MOMENTUM</div>
<div class="a t" style="left:25.90px;top:550.69px;font-size:12.06px;line-height:12.06px;color:#c4c8d0;transform:scaleX(0.786);transform-origin:0 0;">STATUS</div>
<svg class="a" style="left:273px;top:547px" width="19" height="19"><path d="M9.4 1L18.2 17.6H0.6Z" fill="#e8d838" stroke="#111" stroke-width="1.2" stroke-linejoin="round"/><rect x="8.6" y="7" width="1.7" height="5.5" fill="#111"/><rect x="8.6" y="13.8" width="1.7" height="1.8" fill="#111"/></svg>
<div class="a t" style="left:302.50px;top:550.71px;font-size:11.92px;line-height:11.92px;color:#e06c66;font-weight:bold;letter-spacing:1.64px;transform:scaleX(0.800);transform-origin:0 0;">AVOID</div>
<div class="a" style="left:26.20px;top:579.30px;width:100.60px;height:45.10px;background:#0c0f1a;border-radius:4px"></div>
<div class="a" style="left:131.40px;top:579.30px;width:101.50px;height:45.10px;background:#0c0f1a;border-radius:4px"></div>
<div class="a" style="left:237.10px;top:579.30px;width:100.60px;height:45.10px;background:#0c0f1a;border-radius:4px"></div>
<div class="a t" style="left:52.70px;top:585.34px;font-size:12.35px;line-height:12.35px;color:#c0c4cc;transform:scaleX(0.753);transform-origin:0 0;">ATR RATIO</div>
<div class="a t" style="left:62.40px;top:604.63px;font-size:13.08px;line-height:13.08px;color:#ecedf2;font-weight:bold;transform:scaleX(0.870);transform-origin:0 0;">1.43x</div>
<div class="a t" style="left:155.50px;top:585.34px;font-size:12.35px;line-height:12.35px;color:#6ab85e;transform:scaleX(0.819);transform-origin:0 0;">BUY COND</div>
<div class="a t" style="left:176.20px;top:604.63px;font-size:13.08px;line-height:13.08px;color:#ecedf2;font-weight:bold;transform:scaleX(0.851);transform-origin:0 0;">10</div>
<div class="a t" style="left:261.20px;top:585.34px;font-size:12.35px;line-height:12.35px;color:#c04a44;transform:scaleX(0.758);transform-origin:0 0;">SELL COND</div>
<div class="a t" style="left:281.00px;top:604.63px;font-size:13.08px;line-height:13.08px;color:#ecedf2;font-weight:bold;transform:scaleX(0.851);transform-origin:0 0;">10</div>
<div class="a" style="left:10.00px;top:661.20px;width:340.00px;height:138.40px;border:1px solid #2c1d52;background:linear-gradient(135deg,#0c0b18,#08090f);border-radius:10px"></div>
<div class="a" style="left:23.00px;top:678.00px;width:3.90px;height:12.00px;background:#a050e8"></div>
<div class="a" style="left:29.00px;top:678.00px;width:4.00px;height:12.00px;background:#8a60c4"></div>
<div class="a" style="left:35.00px;top:678.00px;width:3.90px;height:12.00px;background:#6a5a84"></div>
<div class="a t" style="left:47.30px;top:677.34px;font-size:12.35px;line-height:12.35px;color:#a8a0f0;font-weight:bold;letter-spacing:1.12px;transform:scaleX(0.800);transform-origin:0 0;background:linear-gradient(90deg,#b07cf0,#90d8f0);-webkit-background-clip:text;background-clip:text;color:transparent;">LIQUIDITY GAPS</div>
<div class="a" style="left:289.00px;top:674.00px;width:48.00px;height:19.60px;border:1.5px solid #4a2a80;background:#150f25;border-radius:10px"></div>
<div class="a t" style="left:298.20px;top:679.13px;font-size:9.30px;line-height:9.30px;color:#c8b8e8;font-weight:bold;letter-spacing:0.24px;transform:scaleX(0.850);transform-origin:0 0;">6 OPEN</div>
<div class="a t" style="left:23.00px;top:708.45px;font-size:7.27px;line-height:7.27px;color:#5a4a7a;transform:scaleX(0.777);transform-origin:0 0;">CLOSEST MAGNET</div>
<div class="a t" style="left:23.00px;top:723.11px;font-size:15.70px;line-height:15.70px;color:#fafafa;font-weight:bold;transform:scaleX(0.909);transform-origin:0 0;">198.2</div>
<div class="a t" style="left:62.20px;top:729.51px;font-size:8.14px;line-height:8.14px;color:#8a8e9a;font-weight:bold;transform:scaleX(0.921);transform-origin:0 0;">PIPS</div>
<div class="a" style="left:225.50px;top:705.90px;width:111.50px;height:18.70px;border:1px solid #4a1c22;background:#1f0f14;border-radius:3px;box-shadow:0 0 10px rgba(200,200,200,.18)"></div>
<svg class="a" style="left:254px;top:710px" width="8" height="10"><path d="M4 0.3C5 2.5 7.6 4 7.6 6.6 7.6 8.6 6 9.8 4 9.8S0.4 8.6 0.4 6.6C0.4 5 1.4 4.3 1.8 3.4 2.4 4.4 2.6 4.8 3 5 3.2 3.2 3.2 1.6 4 0.3Z" fill="#f07a1a"/><path d="M4 5.2C4.8 6.4 5.8 7 5.8 8.2 5.8 9.2 5 9.8 4 9.8S2.2 9.2 2.2 8.2C2.2 7 3.2 6.4 4 5.2Z" fill="#ffd23a"/></svg>
<div class="a t" style="left:264.60px;top:710.93px;font-size:9.30px;line-height:9.30px;color:#e07070;font-weight:bold;transform:scaleX(0.741);transform-origin:0 0;">VORTEX: BEARISH</div>
<div class="a t" style="left:224.70px;top:733.05px;font-size:12.59px;line-height:12.59px;color:#8ccae8;font-family:'Liberation Mono',monospace;transform:scaleX(0.877);transform-origin:0 0;-webkit-text-stroke:.3px #8ccae8;">DIST: 3750.5 Pips</div>
<div class="a t" style="left:23.40px;top:761.66px;font-size:12.21px;line-height:12.21px;color:#7a7e8a;font-weight:bold;letter-spacing:1.15px;transform:scaleX(0.800);transform-origin:0 0;">GAP INTENSITY</div>
<div class="a t" style="left:306.10px;top:761.66px;font-size:12.21px;line-height:12.21px;color:#7a7e8a;font-weight:bold;letter-spacing:1.93px;transform:scaleX(0.800);transform-origin:0 0;">100%</div>
<div class="a" style="left:23.80px;top:781.70px;width:312.40px;height:4.50px;background:linear-gradient(90deg,#c8383a,#e89a4e);border-radius:3px"></div>
<div class="a" style="left:0.00px;top:820.00px;width:360.00px;height:20.00px;background:#9400d3;border-radius:3px"></div>
<div class="a t" style="left:154.00px;top:824.98px;font-size:11.48px;line-height:11.48px;color:#ffffff;transform:scaleX(0.938);transform-origin:0 0;">Reset Calc</div>
</div>
</body></html>
